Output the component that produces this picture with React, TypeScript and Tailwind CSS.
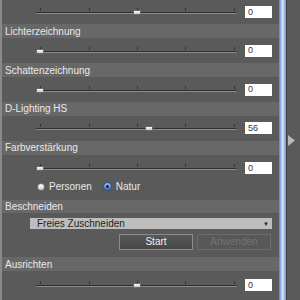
import React from "react";

const TICKS = [4, 53, 101, 149, 198];

function Slider({ pos }: { pos: number }) {
  return (
    <div className="relative w-[201px] h-[10px]">
      {TICKS.map((t) => (
        <div
          key={t}
          className="absolute top-[1px] w-[1px] h-[3px] bg-[#333333]"
          style={{ left: t }}
        />
      ))}
      <div className="absolute left-0 right-0 top-[5px] h-[1px] bg-[#2f2f2f] rounded-full" />
      <div className="absolute left-0 right-0 top-[6px] h-[1px] bg-[#8c8c8c] rounded-full" />
      <div
        className="absolute top-[3px] w-[8px] h-[5px] bg-gradient-to-b from-[#ffffff] to-[#c8c8c8] border border-[#6a6a6a]"
        style={{ left: pos - 4 }}
      />
    </div>
  );
}

function Input({ value }: { value: string }) {
  return (
    <div className="w-[27px] h-[12px] bg-white flex items-center pl-[3px] text-[9px] text-[#333] leading-none">
      {value}
    </div>
  );
}

function SliderRow({ pos, value, h }: { pos: number; value: string; h: string }) {
  return (
    <div className={`flex items-center ${h}`}>
      <div className="w-[34px]" />
      <Slider pos={pos} />
      <div className="w-[8px]" />
      <Input value={value} />
    </div>
  );
}

function Header({ title }: { title: string }) {
  return (
    <div className="h-[14px] bg-[#686868] flex items-center pl-[3px] pt-[1px] text-[10px] text-[#e8e8e8] leading-none">
      {title}
    </div>
  );
}

export default function App() {
  return (
    <div
      className="w-[300px] h-[300px] overflow-hidden flex bg-[#595959]"
      style={{ fontFamily: '"Liberation Sans", Arial, sans-serif' }}
    >
      <div className="w-[2px] bg-[#8a8a8a]" />
      <div className="w-[277px] flex flex-col bg-[#5a5a5a]">
        <SliderRow pos={101} value="0" h="h-[25px]" />
        <Header title="Lichterzeichnung" />
        <SliderRow pos={4} value="0" h="h-[26px]" />
        <Header title="Schattenzeichnung" />
        <SliderRow pos={4} value="0" h="h-[26px]" />
        <Header title="D-Lighting HS" />
        <SliderRow pos={113} value="56" h="h-[26px]" />
        <Header title="Farbverstärkung" />
        <SliderRow pos={4} value="0" h="h-[28px]" />
        <div className="h-[10px] flex items-center text-[10px] text-[#e8e8e8] leading-none">
          <div className="w-[35px]" />
          <div className="w-[8px] h-[8px] rounded-full bg-gradient-to-b from-white to-[#cfcfcf] border border-[#777]" />
          <span className="ml-[4px]">Personen</span>
          <div className="w-[11px]" />
          <div className="w-[9px] h-[9px] rounded-full bg-gradient-to-b from-[#9ec0f2] to-[#3f72c8] border border-[#2c4f90] flex items-center justify-center">
            <div className="w-[3px] h-[3px] rounded-full bg-[#1a1a1a]" />
          </div>
          <span className="ml-[4px]">Natur</span>
        </div>
        <div className="h-[8px]" />
        <Header title="Beschneiden" />
        <div className="flex flex-col h-[45px] pt-[5px]">
          <div className="ml-[28px] w-[242px] h-[11px] bg-[#bdbdbd] flex items-center pl-[7px] text-[10px] text-[#1e1e1e] leading-none">
            <span className="flex-1">Freies Zuschneiden</span>
            <span className="text-[6px] mr-[3px]">▼</span>
          </div>
          <div className="flex mt-[5px] ml-[117px] gap-[4px]">
            <div className="w-[74px] h-[16px] border border-[#8c8c8c] bg-gradient-to-b from-[#575757] to-[#474747] flex items-center justify-center text-[10px] text-[#f0f0f0] leading-none">
              Start
            </div>
            <div className="w-[74px] h-[16px] border border-[#6c6c6c] bg-[#585858] flex items-center justify-center text-[10px] text-[#727272] leading-none">
              Anwenden
            </div>
          </div>
        </div>
        <Header title="Ausrichten" />
        <SliderRow pos={101} value="0" h="h-[30px]" />
      </div>
      <div className="w-[7px] bg-gradient-to-r from-[#5f80c6] via-[#d6e2fa] to-[#7696d4]" />
      <div className="w-[1px] bg-[#3e3e3e]" />
      <div className="flex-1 bg-[#5a5a5a] flex flex-col items-start pt-[135px] pl-[1px]">
        <svg width="8" height="11" viewBox="0 0 8 11">
          <polygon points="0,0 7,5.5 0,11" fill="#b9b9b9" />
        </svg>
      </div>
    </div>
  );
}
